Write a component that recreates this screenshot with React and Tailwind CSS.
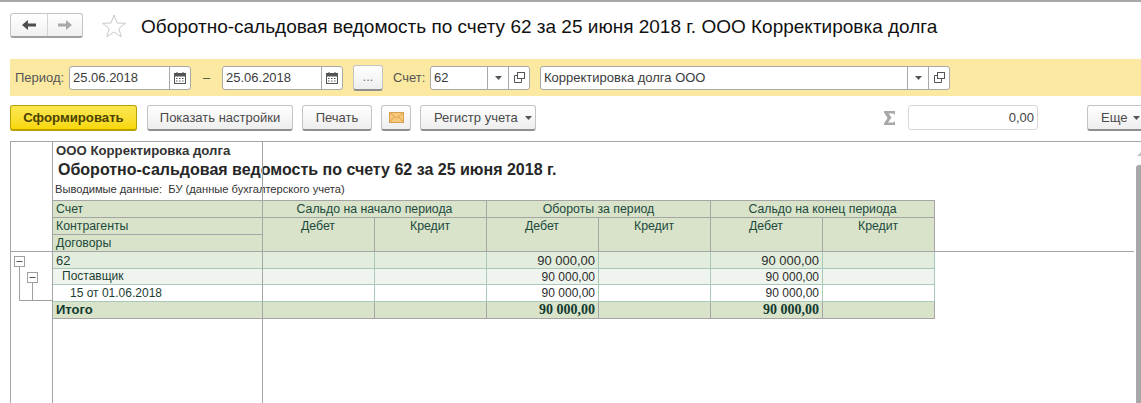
const NavArrow = ({ dir, color }) => (
  <svg width="14" height="10" viewBox="0 0 14 10">
    <path
      d={dir === "left" ? "M0 5 L6 0 V3.5 H14 V6.5 H6 V10 Z" : "M14 5 L8 0 V3.5 H0 V6.5 H8 V10 Z"}
      fill={color}
    />
  </svg>
);

const Caret = () => (
  <svg width="7" height="4" viewBox="0 0 7 4" className="shrink-0">
    <path d="M0 0 H7 L3.5 4 Z" fill="#555" />
  </svg>
);

const CalendarIcon = () => (
  <svg width="12" height="12" viewBox="0 0 12 12">
    <rect x="0.5" y="1.5" width="11" height="10" fill="#fff" stroke="#555" />
    <rect x="0.5" y="1.5" width="11" height="3" fill="#555" />
    <rect x="2.5" y="0" width="1" height="2" fill="#555" />
    <rect x="8.5" y="0" width="1" height="2" fill="#555" />
    <path d="M2 6.5h1.5M5 6.5h1.5M8 6.5h1.5M2 9h1.5M5 9h1.5M8 9h1.5" stroke="#555" />
  </svg>
);

const OpenIcon = () => (
  <svg width="11" height="11" viewBox="0 0 11 11" fill="none" stroke="#555">
    <rect x="3.5" y="0.5" width="7" height="6" />
    <path d="M3.5 3.5 H0.5 V10.5 H7.5 V6.5" />
  </svg>
);

const MailIcon = () => (
  <svg width="15" height="11" viewBox="0 0 15 11">
    <rect x="0.5" y="0.5" width="14" height="10" fill="#f7c97c" stroke="#d9a04e" />
    <path d="M0.5 0.5 L7.5 6 L14.5 0.5 M0.5 10.5 L5.5 4.5 M14.5 10.5 L9.5 4.5" fill="none" stroke="#d9a04e" />
  </svg>
);

const SigmaIcon = () => (
  <svg width="12" height="14" viewBox="0 0 12 14" className="mt-[6px] shrink-0">
    <path d="M0 0 H11 V4 L9.5 2.5 H4.5 L7.5 6.5 L4 11.5 H9.5 L11 10 V14 H0 V12.5 L3.5 7 L0 1.5 Z" fill="#a8a8a8" />
  </svg>
);

const FieldBtn = ({ children }) => (
  <div className="w-[21px] h-full flex items-center justify-center border-l border-[#a8a8a8]">{children}</div>
);

const Field = ({ width, value, children }) => (
  <div
    className="h-[24px] shrink-0 flex items-center bg-white border border-[#a8a8a8] rounded-[3px] text-[13px] text-[#3b3b3b]"
    style={{ width }}
  >
    <span className="flex-1 pl-[3px] whitespace-nowrap">{value}</span>
    {children}
  </div>
);

const Btn = ({ className = "", children }) => (
  <div
    className={`h-[26px] shrink-0 flex items-center justify-center rounded-[3px] border border-[#c4c4c4] border-b-[#8f8f8f] border-b-2 bg-gradient-to-b from-white to-[#eeeeee] text-[13px] text-[#4a4a4a] whitespace-nowrap ${className}`}
  >
    {children}
  </div>
);

const hd = "bg-[#d8e3ca] border-r border-b border-[#a5a5a5] text-[12.3px] text-[#1d4a3c] leading-[17px] whitespace-nowrap";

const rows = [
  { name: "62", pad: "pl-[3px]", bg: "bg-[#e3eddd]", h: "h-[17px]", size: "text-[13px]", lead: "leading-[17px]", numLead: "leading-[17px]" },
  { name: "Поставщик", pad: "pl-[9px]", bg: "bg-[#eff5ee]", h: "h-[16px]", size: "text-[12px]", lead: "leading-[15px]", numLead: "leading-[16px]" },
  { name: "15 от 01.06.2018", pad: "pl-[17px]", bg: "bg-white", h: "h-[17px]", size: "text-[12px]", lead: "leading-[17px]", numLead: "leading-[17px]" },
];

const Row = ({ name, pad, bg, h, size, lead, numLead }) => (
  <>
    <div className={`${bg} ${h} ${pad} ${size} ${lead} border-r border-b border-[#a9cabb] text-[#1d3d33] whitespace-nowrap`}>{name}</div>
    {[0, 1, 2, 3, 4, 5].map((i) => (
      <div
        key={i}
        className={`${bg} ${h} ${size} ${numLead} border-r border-b border-[#a9cabb] text-right pr-[3px] text-[#2c2c2c] whitespace-nowrap`}
      >
        {i === 2 || i === 4 ? "90 000,00" : ""}
      </div>
    ))}
  </>
);

export default function App() {
  return (
    <div className="w-[1141px] h-[403px] overflow-hidden bg-white flex flex-col font-['Liberation_Sans',Arial,sans-serif] border-t-[2px] border-[#a8a8a8]">
      {/* Title */}
      <div className="h-[57px] flex items-start pl-[10px] pt-[11px] shrink-0">
        <div className="w-[73px] h-[25px] shrink-0 flex rounded-[3px] border border-[#c4c4c4] border-b-2 border-b-[#a0a0a0] bg-gradient-to-b from-white to-[#f0f0f0]">
          <div className="w-[37px] flex items-center justify-center border-r border-[#d4d4d4]">
            <NavArrow dir="left" color="#4d4d4d" />
          </div>
          <div className="flex-1 flex items-center justify-center">
            <NavArrow dir="right" color="#a9a9a9" />
          </div>
        </div>
        <svg width="24" height="24" viewBox="0 0 24 24" className="ml-[19px] mt-[1px] shrink-0">
          <path d="M12 1 L15 9 L23.5 9.3 L16.8 14.5 L19.2 22.8 L12 18 L4.8 22.8 L7.2 14.5 L0.5 9.3 L9 9 Z" fill="#fff" stroke="#c9c9c9" />
        </svg>
        <h1 className="ml-[15px] text-[19px] leading-[28px] text-[#111] font-normal whitespace-nowrap">
          Оборотно-сальдовая ведомость по счету 62 за 25 июня 2018 г. ООО Корректировка долга
        </h1>
      </div>

      {/* Filter bar */}
      <div className="ml-[10px] h-[37px] bg-[#fbe9a2] flex items-center pl-[5px] shrink-0 text-[13px] text-[#555]">
        <span className="w-[54px]">Период:</span>
        <Field width={122} value="25.06.2018">
          <FieldBtn><CalendarIcon /></FieldBtn>
        </Field>
        <span className="w-[31px] text-center">–</span>
        <Field width={121} value="25.06.2018">
          <FieldBtn><CalendarIcon /></FieldBtn>
        </Field>
        <Btn className="w-[30px] ml-[10px] text-[#777]">...</Btn>
        <span className="ml-[10px] w-[37px]">Счет:</span>
        <Field width={100} value="62">
          <FieldBtn><Caret /></FieldBtn>
          <FieldBtn><OpenIcon /></FieldBtn>
        </Field>
        <div className="w-[10px]" />
        <Field width={410} value="Корректировка долга ООО">
          <FieldBtn><Caret /></FieldBtn>
          <FieldBtn><OpenIcon /></FieldBtn>
        </Field>
      </div>

      {/* Commands */}
      <div className="h-[45px] flex items-start pt-[9px] pl-[10px] shrink-0">
        <div className="w-[127px] h-[26px] shrink-0 flex items-center justify-center rounded-[3px] border border-[#b8a000] border-b-2 bg-gradient-to-b from-[#fbe74e] to-[#f8d800] text-[13.2px] font-bold text-[#4b4300]">
          Сформировать
        </div>
        <Btn className="w-[146px] ml-[10px]">Показать настройки</Btn>
        <Btn className="w-[70px] ml-[9px]">Печать</Btn>
        <Btn className="w-[30px] ml-[9px]"><MailIcon /></Btn>
        <Btn className="w-[116px] ml-[9px] justify-start pl-[13px] gap-[7px]">Регистр учета <Caret /></Btn>
        <div className="ml-[348px] w-[14px] shrink-0 flex"><SigmaIcon /></div>
        <div className="ml-[10px] w-[130px] h-[25px] shrink-0 border border-[#d8d8d8] rounded-[3px] text-right pr-[3px] text-[13px] leading-[23px] text-[#444]">0,00</div>
        <Btn className="w-[54px] ml-[49px] justify-start pl-[13px] gap-[6px] rounded-r-none border-r-0">Еще <Caret /></Btn>
      </div>

      {/* Report */}
      <div className="relative ml-[10px] flex-1 flex border-t border-l border-[#a5a5a5]">
        <div className="relative w-[42px] shrink-0 border-r border-[#a5a5a5]">
          <svg width="42" height="190" viewBox="0 0 42 190" className="absolute left-0 top-[109px]">
            <path d="M8.5 12 V49.5 H42 M21.5 28 V49.5" fill="none" stroke="#a0a0a0" />
            <rect x="3.5" y="5.5" width="10" height="10" fill="#fff" stroke="#a0a0a0" />
            <path d="M5.5 10.5 H11.5" stroke="#555" />
            <rect x="16.5" y="21.5" width="10" height="10" fill="#fff" stroke="#a0a0a0" />
            <path d="M18.5 26.5 H24.5" stroke="#555" />
          </svg>
        </div>

        <div className="flex-1">
          <div className="h-[58px] flex flex-col text-[#262626] whitespace-nowrap">
            <div className="pl-[3px] h-[17px] text-[13.2px] leading-[17px] font-bold text-[#333]">ООО Корректировка долга</div>
            <div className="pl-[5px] h-[22px] text-[16px] leading-[22px] font-bold">Оборотно-сальдовая ведомость по счету 62 за 25 июня 2018 г.</div>
            <div className="pl-[2px] mt-[1px] text-[11.15px] leading-[15px] text-[#333]">Выводимые данные:&nbsp; БУ (данные бухгалтерского учета)</div>
          </div>

          <div className="grid grid-cols-[210px_112px_112px_112px_112px_112px_112px] w-[882px] border-t border-[#a5a5a5]">
            <div className={`${hd} h-[17px] pl-[3px]`}>Счет</div>
            <div className={`${hd} h-[17px] col-span-2 text-center`}>Сальдо на начало периода</div>
            <div className={`${hd} h-[17px] col-span-2 text-center`}>Обороты за период</div>
            <div className={`${hd} h-[17px] col-span-2 text-center`}>Сальдо на конец периода</div>

            <div className={`${hd} h-[17px] pl-[3px]`}>Контрагенты</div>
            <div className={`${hd} row-span-2 pl-[38px]`}>Дебет</div>
            <div className={`${hd} row-span-2 pl-[35px]`}>Кредит</div>
            <div className={`${hd} row-span-2 pl-[38px]`}>Дебет</div>
            <div className={`${hd} row-span-2 pl-[35px]`}>Кредит</div>
            <div className={`${hd} row-span-2 pl-[38px]`}>Дебет</div>
            <div className={`${hd} row-span-2 pl-[35px]`}>Кредит</div>
            <div className={`${hd} h-[17px] pl-[3px]`}>Договоры</div>

            {rows.map((r) => (
              <Row key={r.name} {...r} />
            ))}

            <div className="bg-[#d8e3ca] h-[17px] pl-[3px] border-r border-b border-[#a5a5a5] text-[13px] font-bold text-[#123a2e] leading-[16px]">Итого</div>
            {[0, 1, 2, 3, 4, 5].map((i) => (
              <div
                key={i}
                className="bg-[#d8e3ca] h-[17px] border-r border-b border-[#a5a5a5] text-right pr-[3px] text-[14px] font-bold text-[#123a2e] leading-[16px] font-['Liberation_Serif',serif]"
              >
                {i === 2 || i === 4 ? "90 000,00" : ""}
              </div>
            ))}
          </div>
        </div>

        {/* frozen area lines */}
        <div className="absolute left-[251px] top-0 bottom-0 w-px bg-[#a5a5a5]" />
        <div className="absolute left-0 top-[109px] w-[1123px] h-px bg-[#a5a5a5]" />

        {/* scrollbar */}
        <div className="absolute right-0 top-[10px] w-[4px] h-[4px] bg-[#c4c4c4] [clip-path:polygon(100%_0,100%_100%,0_100%)]" />
        <div className="absolute right-0 top-[23px] bottom-0 w-[5px] bg-[#a8a8a8] rounded-tl-[3px]" />
      </div>
    </div>
  );
}
